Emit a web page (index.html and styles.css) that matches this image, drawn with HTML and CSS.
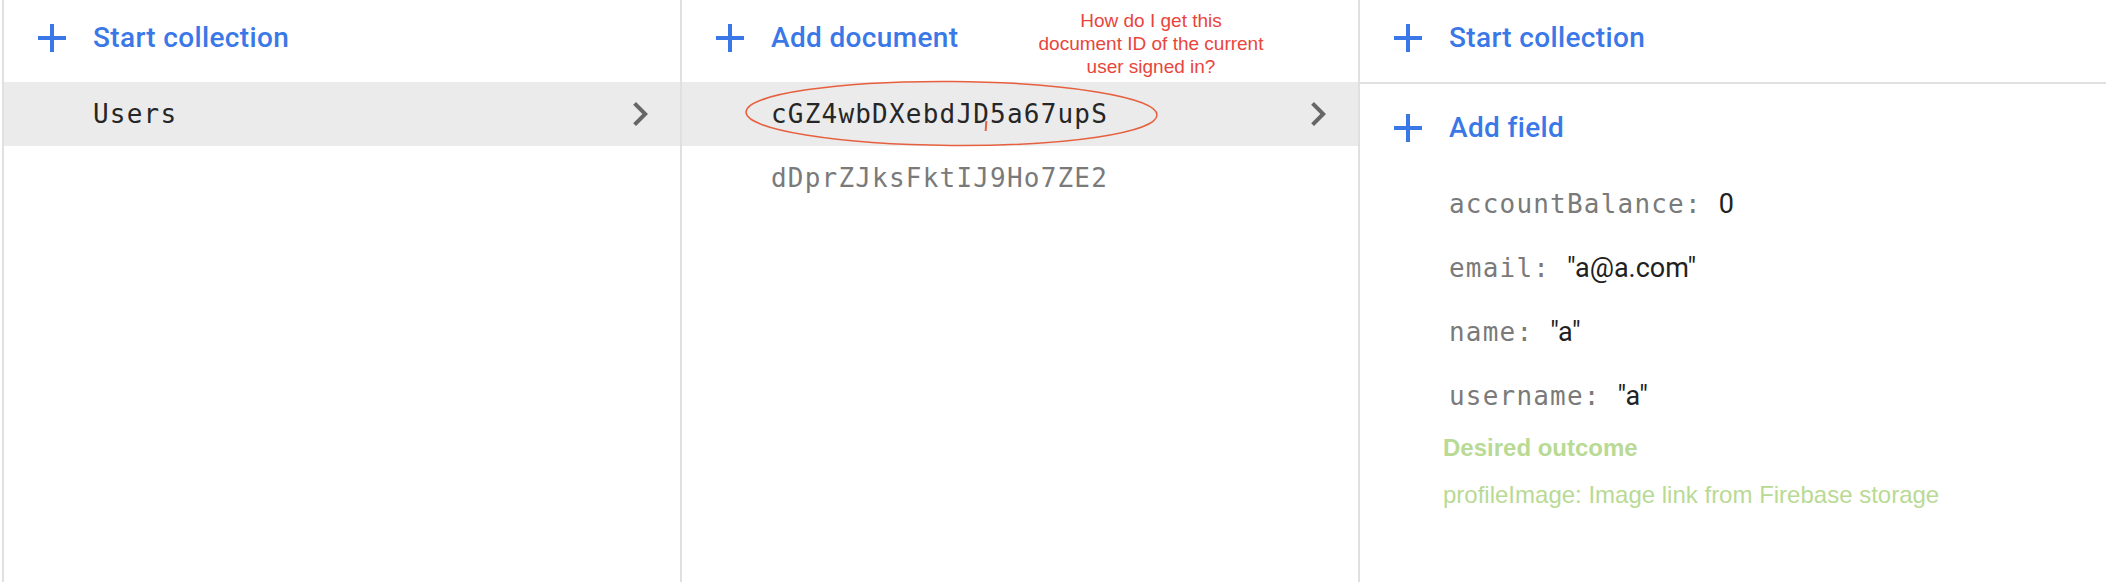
FILE: index.html
```html
<!DOCTYPE html>
<html lang="en">
<head>
<meta charset="utf-8">
<title>Firestore data</title>
<link rel="stylesheet" href="styles.css">
</head>
<body>
<div class="panels">
  <section class="col col-1">
    <div class="col-head">
      <svg class="plus" viewBox="0 0 24 24"><path d="M19 13h-6v6h-2v-6H5v-2h6V5h2v6h6v2z"/></svg>
      <span class="head-label">Start collection</span>
    </div>
    <div class="row row-selected">
      <span class="mono">Users</span>
      <svg class="chevron" viewBox="0 0 24 24"><path d="M10 6L8.59 7.41 13.17 12l-4.58 4.59L10 18l6-6z"/></svg>
    </div>
  </section>

  <section class="col col-2">
    <div class="col-head">
      <svg class="plus" viewBox="0 0 24 24"><path d="M19 13h-6v6h-2v-6H5v-2h6V5h2v6h6v2z"/></svg>
      <span class="head-label">Add document</span>
    </div>
    <div class="row row-selected">
      <span class="mono">cGZ4wbDXebdJD5a67upS</span>
      <svg class="chevron" viewBox="0 0 24 24"><path d="M10 6L8.59 7.41 13.17 12l-4.58 4.59L10 18l6-6z"/></svg>
    </div>
    <div class="row">
      <span class="mono muted">dDprZJksFktIJ9Ho7ZE2</span>
    </div>

    <p class="annotation">How do I get this<br>document ID of the current<br>user signed in?</p>
    <svg class="circle-mark" viewBox="0 0 424 76"><ellipse cx="211.5" cy="37.5" rx="205.5" ry="32" transform="rotate(0.4 211.5 37.5)"/></svg>
    <span class="tick-mark"></span>
  </section>

  <section class="col col-3">
    <div class="col-head col-head-ruled">
      <svg class="plus" viewBox="0 0 24 24"><path d="M19 13h-6v6h-2v-6H5v-2h6V5h2v6h6v2z"/></svg>
      <span class="head-label">Start collection</span>
    </div>
    <div class="add-field">
      <svg class="plus" viewBox="0 0 24 24"><path d="M19 13h-6v6h-2v-6H5v-2h6V5h2v6h6v2z"/></svg>
      <span class="head-label">Add field</span>
    </div>
    <ul class="fields">
      <li class="field"><span class="mono muted">accountBalance: </span><span class="value">0</span></li>
      <li class="field"><span class="mono muted">email: </span><span class="value">"a@a.com"</span></li>
      <li class="field"><span class="mono muted">name: </span><span class="value">"a"</span></li>
      <li class="field"><span class="mono muted">username: </span><span class="value">"a"</span></li>
    </ul>
    <div class="notes">
      <p class="note-title">Desired outcome</p>
      <p class="note-text">profileImage: Image link from Firebase storage</p>
    </div>
  </section>
</div>
</body>
</html>
```

FILE: styles.css
```css
* { box-sizing: border-box; }

html, body {
  margin: 0;
  padding: 0;
  background: #ffffff;
}

body {
  font-family: Roboto, "Liberation Sans", sans-serif;
  color: #212121;
}

.panels {
  display: flex;
  height: 582px;
  padding-left: 2px;
  overflow: hidden;
}

.col {
  position: relative;
  border-left: 2px solid #e0e0e0;
  display: flex;
  flex-direction: column;
}

.col-1, .col-2 { width: 678px; flex: none; }
.col-3 { flex: 1; }

.col-head {
  height: 82px;
  flex: none;
  display: flex;
  align-items: center;
  padding: 0 0 6px 24px;
}

.col-head-ruled {
  height: 84px;
  border-bottom: 2px solid #e0e0e0;
}

.plus {
  width: 48px;
  height: 48px;
  flex: none;
  fill: #3b78e7;
}

.head-label {
  margin-left: 17px;
  font-family: Roboto, "Liberation Sans", sans-serif;
  font-weight: 500;
  font-size: 28px;
  line-height: 34px;
  letter-spacing: 0.35px;
  color: #3b78e7;
}

.row {
  height: 64px;
  flex: none;
  display: flex;
  align-items: center;
  justify-content: space-between;
  padding: 0 16px 0 89px;
}

.row-selected { background: #ebebeb; }

.mono {
  font-family: "DejaVu Sans Mono", "Liberation Mono", monospace;
  font-size: 26px;
  line-height: 32px;
  letter-spacing: 1.2px;
  color: #262626;
  white-space: pre;
}

.mono.muted { color: #7a7a7a; }

.chevron {
  width: 48px;
  height: 48px;
  flex: none;
  fill: #666666;
}

.annotation {
  position: absolute;
  left: 319px;
  top: 9px;
  width: 300px;
  margin: 0;
  text-align: center;
  font-family: "Liberation Sans", Arial, sans-serif;
  font-size: 19px;
  line-height: 23px;
  color: #e8453c;
}

.circle-mark {
  position: absolute;
  left: 58px;
  top: 76px;
  width: 424px;
  height: 76px;
  fill: none;
  stroke: #e6603f;
  stroke-width: 1.5;
}

.tick-mark {
  position: absolute;
  left: 303px;
  top: 121px;
  width: 1.5px;
  height: 10px;
  background: #e6603f;
  transform: rotate(4deg);
}

.add-field {
  height: 88px;
  flex: none;
  display: flex;
  align-items: center;
  padding-left: 24px;
}

.fields {
  list-style: none;
  margin: 0;
  padding: 0;
}

.field {
  height: 64px;
  display: flex;
  align-items: center;
  padding-left: 89px;
}

.value {
  font-family: Roboto, "Liberation Sans", sans-serif;
  font-size: 27px;
  line-height: 32px;
  color: #212121;
}

.notes {
  padding-left: 83px;
  font-family: "Liberation Sans", Arial, sans-serif;
  color: #b9da94;
}

.note-title {
  margin: 4px 0 0;
  font-size: 24px;
  line-height: 32px;
  font-weight: 700;
}

.note-text {
  margin: 15px 0 0;
  font-size: 24px;
  line-height: 32px;
}
```
